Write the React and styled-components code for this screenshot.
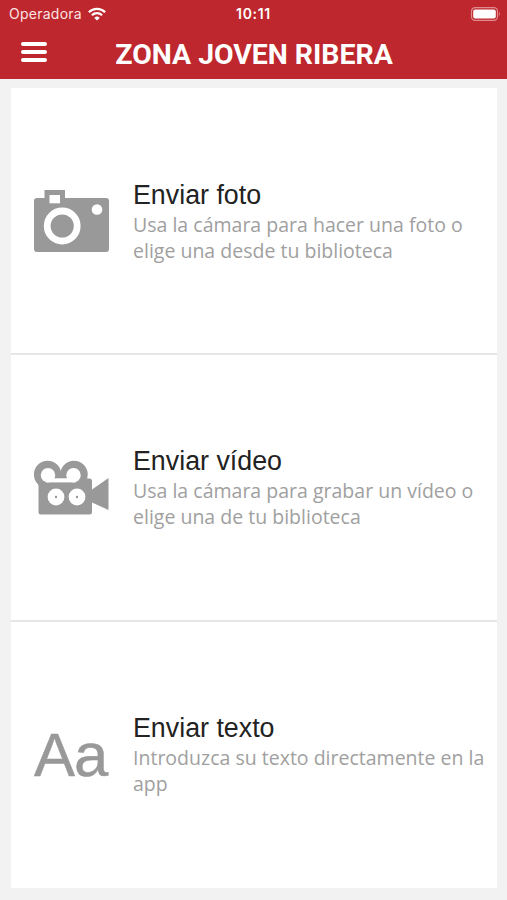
import React from 'react'
import styled, { createGlobalStyle } from 'styled-components';

const GlobalStyle = createGlobalStyle`
    * {
        box-sizing: border-box;
    }

    body {
        margin: 0;
        background: #f2f2f2;
    }
`;

const Screen = styled.div`
    display: flex;
    flex-direction: column;
    height: 900px;
    overflow: hidden;
    background: #f2f2f2;
`;

const Header = styled.header`
    height: 79px;
    flex-shrink: 0;
    background: #be272d;
    color: white;
`;

const StatusBar = styled.div`
    display: grid;
    grid-template-columns: 1fr auto 1fr;
    align-items: center;
    height: 27px;
    padding: 0 6px 0 9px;
    font-family: Inter, sans-serif;
    font-size: 14px;
`;

const Carrier = styled.div`
    display: flex;
    align-items: center;
    gap: 6px;
    color: #fbe4e4;
    letter-spacing: 0.25px;
`;

const Time = styled.span`
    margin-right: 3px;
    font-size: 14px;
    font-weight: 600;
    letter-spacing: 0.7px;
`;

const BatteryArea = styled.div`
    display: flex;
    justify-content: flex-end;
`;

const TitleBar = styled.div`
    display: grid;
    grid-template-columns: 94px 1fr 93px;
    align-items: center;
    height: 53px;
`;

const MenuButton = styled.button`
    display: flex;
    flex-direction: column;
    gap: 4px;
    width: 26px;
    margin: 0 0 3px 21px;
    padding: 0;
    border: 0;
    background: none;
`;

const MenuLine = styled.span`
    height: 4px;
    border-radius: 2px;
    background: white;
`;

const Title = styled.h1`
    margin: 2px 0 0;
    font-family: Roboto, sans-serif;
    font-size: 28.4px;
    font-weight: 700;
    line-height: 34px;
    text-align: center;
    white-space: nowrap;
`;

const OptionList = styled.main`
    display: grid;
    grid-template-rows: 266px 267px 267px;
    height: 800px;
    margin: 9px 10px 0 11px;
    background: white;
`;

const Option = styled.section`
    display: flex;
    align-items: center;
    padding-left: 22px;
    box-shadow: ${props => props.$last ? "none" : "inset 0 -1px #e6e6e6, 0 1px #e6e6e6"};
`;

const IconArea = styled.div`
    display: flex;
    flex-shrink: 0;
    align-items: center;
    width: 100px;
    height: 80px;
    color: #999999;
`;

const Letters = styled.span`
    padding-left: 1px;
    font-family: "Liberation Sans", sans-serif;
    font-size: 61.5px;
    line-height: 80px;
    letter-spacing: -1px;
    -webkit-text-stroke: 0.5px currentColor;
`;

const OptionText = styled.div`
    width: 360px;
    padding-top: 1.4px;
`;

const OptionHeader = styled.h2`
    margin: 0;
    color: #222222;
    font-family: "Liberation Sans", sans-serif;
    font-size: 26.8px;
    font-weight: 400;
    line-height: 32px;
`;

const OptionParagraph = styled.p`
    margin: 0.6px 0 0;
    color: #a0a0a0;
    font-family: "Open Sans", sans-serif;
    font-size: 19.53px;
    line-height: 26.4px;
`;

const WifiIcon = () => (
    <svg width="18" height="14" viewBox="0 0 18 14" fill="none" stroke="white" strokeWidth="2.3">
        <path d="M0.9 5.2a11.5 11.5 0 0 1 16.2 0" />
        <path d="M3.9 8.2a7.2 7.2 0 0 1 10.2 0" />
        <path d="M9 13.6L6.3 10.9a3.8 3.8 0 0 1 5.4 0z" fill="white" stroke="none" />
    </svg>
);

const BatteryIcon = () => (
    <svg width="31" height="14" viewBox="0 0 31 14">
        <rect x="1.5" y="0.7" width="26" height="12.6" rx="3.6" fill="none" stroke="#df8b8f" strokeWidth="1.2" />
        <rect x="3.2" y="2.4" width="22.6" height="9.2" rx="2" fill="white" />
        <path d="M28.9 4.8q2 2.2 0 4.4z" fill="#df8b8f" />
    </svg>
);

const CameraIcon = () => (
    <svg width="76" height="64" viewBox="33 189 76 64">
        <path d="M44.5 190h20.5v8h41a3 3 0 0 1 3 3v48a3 3 0 0 1-3 3H37a3 3 0 0 1-3-3v-48a3 3 0 0 1 3-3h7.5z" fill="currentColor" />
        <rect x="49.5" y="195" width="10.5" height="8.3" fill="white" />
        <circle cx="62.2" cy="226" r="15" fill="none" stroke="white" strokeWidth="6.8" />
        <circle cx="97" cy="209.5" r="5.3" fill="white" />
    </svg>
);

const VideoIcon = () => (
    <svg width="76" height="56" viewBox="33 459.5 76 56">
        <g fill="currentColor">
            <circle cx="47.6" cy="474" r="13.7" />
            <circle cx="74" cy="474" r="13.7" />
            <path d="M38.5 478H89.5a2.5 2.5 0 0 1 2.5 2.5V489l16.5-11.5v32L92 502v9.5a2.5 2.5 0 0 1-2.5 2.5H41a2.5 2.5 0 0 1-2.5-2.5z" />
        </g>
        <g fill="white">
            <circle cx="48" cy="474.7" r="7.2" />
            <circle cx="73.5" cy="474.7" r="7.2" />
            <rect x="46" y="477.8" width="30" height="4.1" />
            <circle cx="56" cy="496.5" r="8.4" />
            <circle cx="77" cy="496.5" r="8.4" />
        </g>
        <g fill="currentColor">
            <circle cx="56" cy="496.5" r="1.2" />
            <circle cx="77" cy="496.5" r="1.2" />
        </g>
    </svg>
);

const options = [
    {
        heading: "Enviar foto",
        paragraph: "Usa la cámara para hacer una foto o elige una desde tu biblioteca",
        icon: <CameraIcon />,
    },
    {
        heading: "Enviar vídeo",
        paragraph: "Usa la cámara para grabar un vídeo o elige una de tu biblioteca",
        icon: <VideoIcon />,
    },
    {
        heading: "Enviar texto",
        paragraph: "Introduzca su texto directamente en la app",
        icon: <Letters>Aa</Letters>,
    },
];

const App = () => {
    return (
        <Screen>
            <GlobalStyle />
            <Header>
                <StatusBar>
                    <Carrier>Operadora <WifiIcon /></Carrier>
                    <Time>10:11</Time>
                    <BatteryArea><BatteryIcon /></BatteryArea>
                </StatusBar>
                <TitleBar>
                    <MenuButton aria-label="Menú">
                        <MenuLine />
                        <MenuLine />
                        <MenuLine />
                    </MenuButton>
                    <Title>ZONA JOVEN RIBERA</Title>
                </TitleBar>
            </Header>
            <OptionList>
                {options.map((option, index) => (
                    <Option key={option.heading} $last={index === options.length - 1}>
                        <IconArea>{option.icon}</IconArea>
                        <OptionText>
                            <OptionHeader>{option.heading}</OptionHeader>
                            <OptionParagraph>{option.paragraph}</OptionParagraph>
                        </OptionText>
                    </Option>
                ))}
            </OptionList>
        </Screen>
    );
}

export default App;
